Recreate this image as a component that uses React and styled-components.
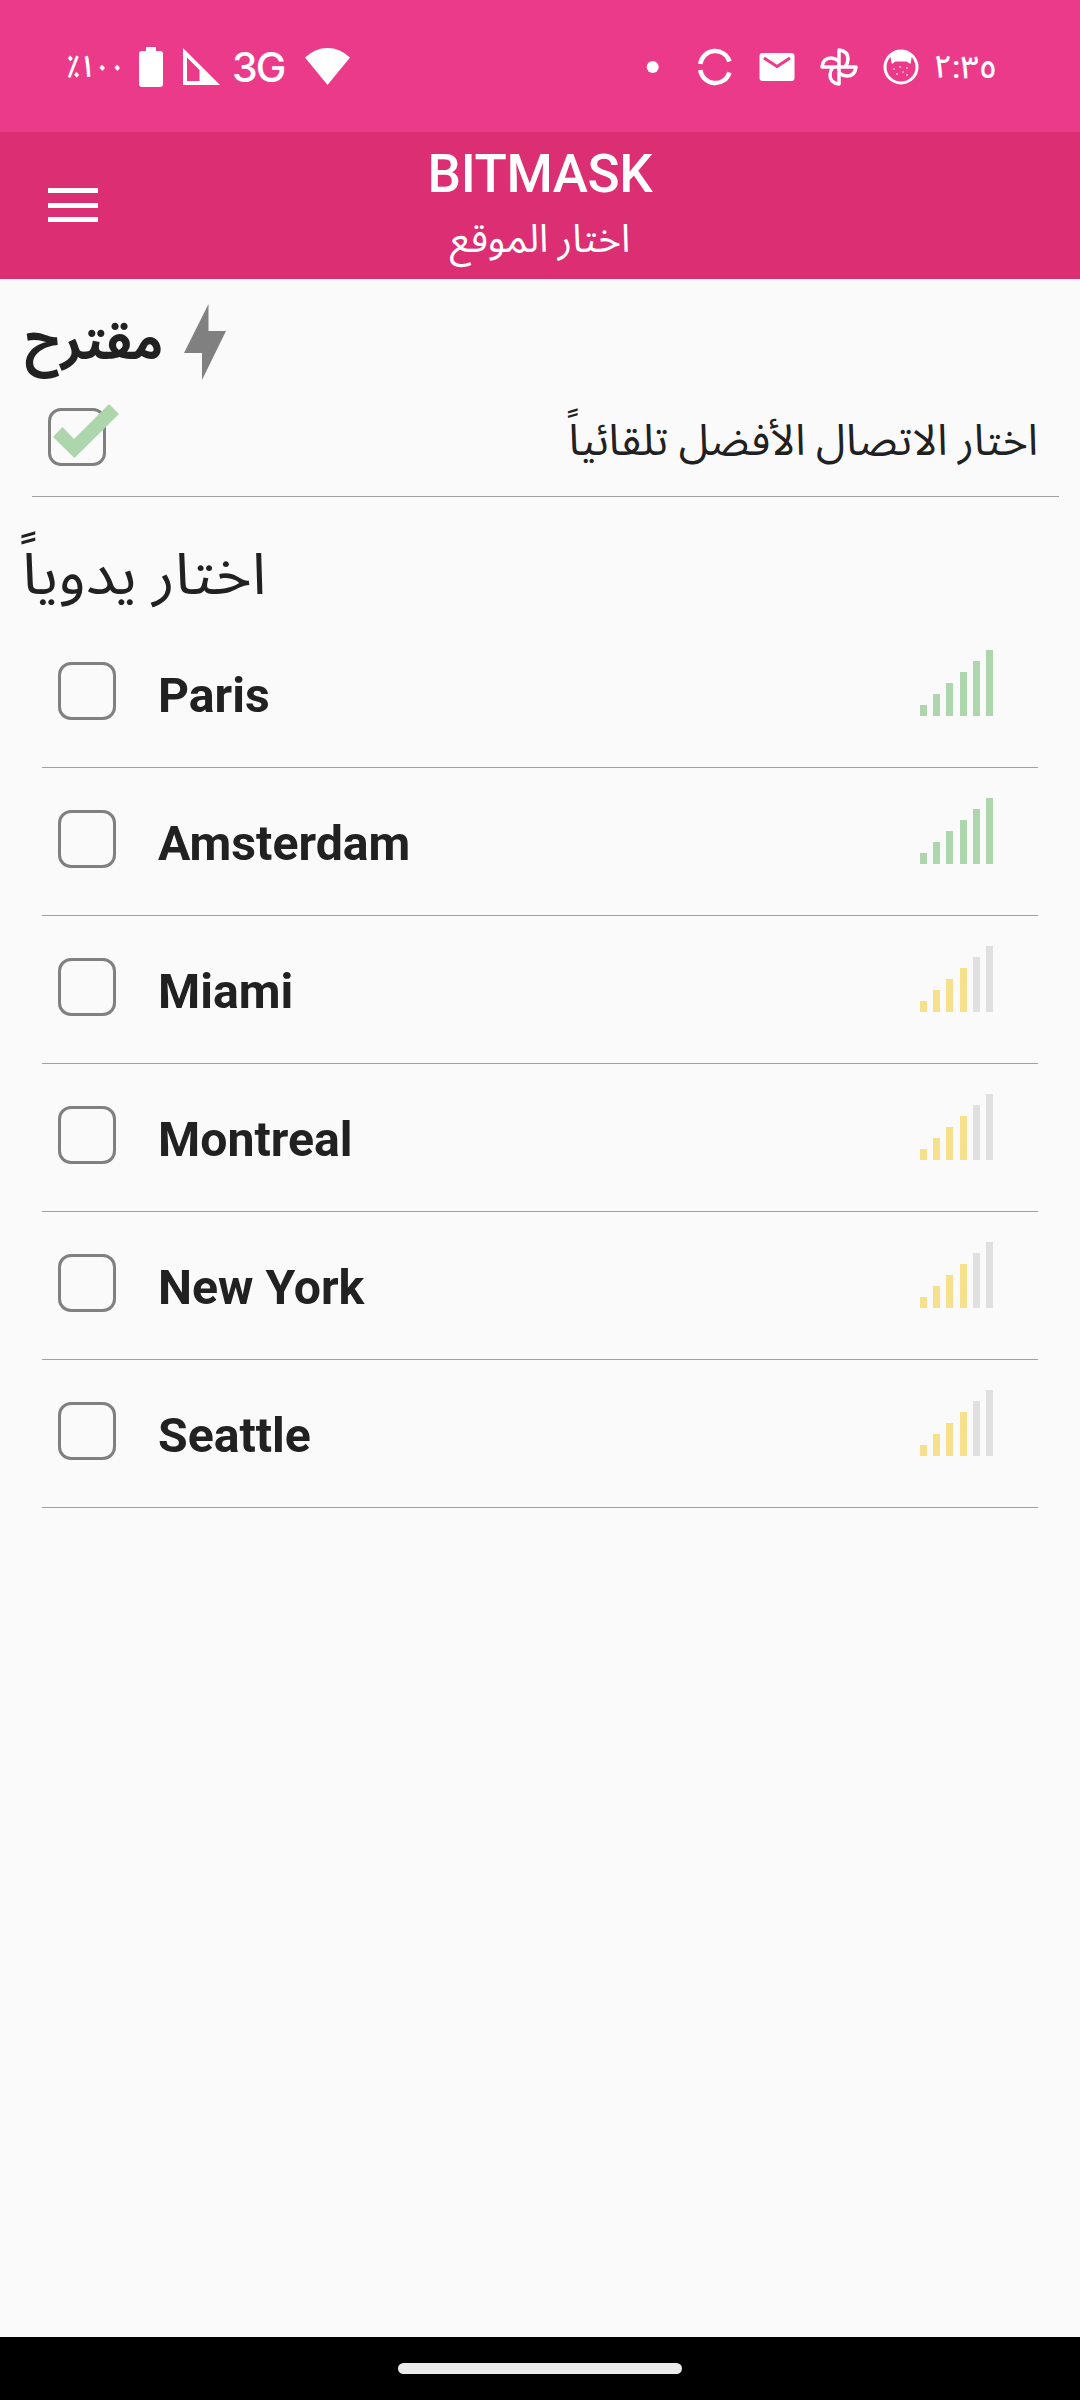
import styled, { createGlobalStyle } from "styled-components";

const GlobalStyle = createGlobalStyle`
  * {
    box-sizing: border-box;
  }

  body {
    margin: 0;
    background: #fafafa;
    color: #212121;
    font-family: Roboto, "Noto Sans Arabic", "Noto Naskh Arabic", "DejaVu Sans", sans-serif;
  }
`;

const Screen = styled.div`
  width: 1080px;
  height: 2400px;
  display: flex;
  flex-direction: column;
  background: #fafafa;
`;

const StatusBar = styled.div`
  height: 132px;
  padding: 2px 83px 0 70px;
  display: flex;
  justify-content: space-between;
  align-items: center;
  background: #ec3a8b;
  color: white;
`;

const StatusGroup = styled.div`
  display: flex;
  align-items: center;

  svg {
    display: block;
    flex: none;
  }
`;

const Arabic = styled.span`
  display: block;
  direction: rtl;
  white-space: nowrap;
  font-size: ${(props) => props.$size}px;
  font-weight: ${(props) => props.$weight || 400};
  line-height: ${(props) => props.$line}px;
`;

const StatusText = styled(Arabic)`
  width: ${(props) => props.$width}px;
`;

const BatteryLevel = styled(Arabic)`
  width: 69px;
  padding-right: 4px;
  transform: scaleX(0.84);
  transform-origin: left center;
`;

const Network = styled.span`
  width: 50px;
  margin: 0 23px 0 12px;
  font-family: Inter, sans-serif;
  font-size: 41px;
  font-weight: 500;
  line-height: 46px;
  letter-spacing: -2px;
`;

const BatteryIcon = styled.svg`
  margin-right: 20px;
`;

const AppBar = styled.header`
  height: 147px;
  padding: 0 48px;
  display: grid;
  grid-template-columns: 50px 1fr 50px;
  background: #dc2e73;
  color: white;
`;

const MenuButton = styled.button`
  width: 50px;
  height: 34px;
  margin-top: 56px;
  padding: 0;
  border: 0;
  background: none;
  display: flex;
  flex-direction: column;
  justify-content: space-between;
`;

const MenuLine = styled.span`
  width: 50px;
  height: 5px;
  background: white;
`;

const Heading = styled.div`
  display: flex;
  flex-direction: column;
  align-items: center;
`;

const Title = styled.h1`
  margin: 0;
  padding-top: 9px;
  font-size: 53px;
  font-weight: 500;
  line-height: 66px;
  letter-spacing: -0.4px;
`;

const Content = styled.main`
  flex: 1;
`;

const Recommended = styled.h2`
  height: 113px;
  margin: 0;
  padding: 25px 0 0 25px;
  display: flex;
  align-items: flex-start;
  gap: 21px;
`;

const AutoRow = styled.div`
  height: 105px;
  margin: 0 21px 0 32px;
  padding: 12px 21px 0 16px;
  display: flex;
  justify-content: space-between;
  align-items: flex-start;
  border-bottom: 1px solid #a0a0a0;
`;

const AutoLabel = styled(Arabic)`
  margin-top: 4px;
`;

const ManualTitle = styled.h2`
  height: 123px;
  margin: 0;
  padding: 40px 0 0 22px;
  display: flex;
`;

const ManualLabel = styled(Arabic)`
  transform: scaleX(1.07);
  transform-origin: left center;
`;

const LocationRow = styled.div`
  height: 148px;
  margin: 0 42px;
  padding: 0 45px 0 16px;
  display: flex;
  align-items: flex-start;
  border-bottom: 1px solid #a0a0a0;
`;

const CheckFrame = styled.div`
  position: relative;
  flex: none;
  width: 58px;
  height: 58px;
  margin-top: ${(props) => props.$top || 0}px;
  border: 3px solid #808080;
  border-radius: 13px;

  svg {
    position: absolute;
    left: 2px;
    top: -7px;
  }
`;

const LocationName = styled.span`
  flex: 1;
  margin: 48px 0 0 42px;
  font-size: 48.2px;
  font-weight: 700;
  line-height: 56px;
`;

const Bars = styled.div`
  display: flex;
  align-items: flex-end;
  justify-content: space-between;
  width: 73px;
  height: 66px;
  margin-top: 30px;
`;

const Bar = styled.span`
  width: 7px;
  height: ${(props) => props.$step * 11}px;
  background: ${(props) => props.$color};
`;

const NavigationBar = styled.div`
  height: 63px;
  display: flex;
  justify-content: center;
  align-items: center;
  background: black;
`;

const HomePill = styled.div`
  width: 284px;
  height: 11px;
  border-radius: 6px;
  background: #ebebeb;
`;

const locations = [
  { name: "Paris", level: 6 },
  { name: "Amsterdam", level: 6 },
  { name: "Miami", level: 4 },
  { name: "Montreal", level: 4 },
  { name: "New York", level: 4 },
  { name: "Seattle", level: 4 },
];

function Signal({ level }) {
  const active = level > 4 ? "#aed6ac" : "#f7e08c";
  return (
    <Bars>
      {[1, 2, 3, 4, 5, 6].map((step) => (
        <Bar key={step} $step={step} $color={step <= level ? active : "#e0e0e0"} />
      ))}
    </Bars>
  );
}

function NotificationIcons() {
  return (
    <svg width="297" height="54" viewBox="0 0 297 54" fill="white">
      <circle cx="12.700" cy="27" r="6" />
      <path
        d="M60.300 24A15 15 0 0 1 89.500 21.500M60.300 30A15 15 0 0 0 89.500 32.500"
        fill="none"
        stroke="white"
        strokeWidth="4.500"
      />
      <rect x="119.500" y="13" width="35" height="28" rx="3" />
      <path d="M124 18l13 8.500L150 18" fill="none" stroke="#ec3a8b" strokeWidth="3" />
      <g transform="translate(199 27)" fill="none" stroke="white" strokeWidth="3.500" strokeLinejoin="round">
        {[0, 90, 180, 270].map((angle) => (
          <path key={angle} d="M0 0V-17Q9 -16 9 -8Q9 -4 6 0" transform={`rotate(${angle})`} />
        ))}
      </g>
      <circle cx="261" cy="27" r="16" fill="none" stroke="white" strokeWidth="3" />
      <path d="M250 15q11-8 22 0l-1.500 9-4-2.500h-11L252 24z" />
      <g opacity="0.6">
        <circle cx="254" cy="29" r="1" />
        <circle cx="260" cy="27" r="1" />
        <circle cx="267" cy="28" r="1" />
        <circle cx="257" cy="34" r="1" />
        <circle cx="263" cy="32" r="1" />
        <circle cx="267" cy="35" r="1" />
      </g>
    </svg>
  );
}

export default function App() {
  return (
    <Screen>
      <GlobalStyle />
      <StatusBar>
        <StatusGroup>
          <BatteryLevel $size={31} $weight={600} $line={46}>
            ١٠٠٪
          </BatteryLevel>
          <BatteryIcon width="24" height="40" viewBox="0 0 24 40" fill="white">
            <path d="M7 0h10v4h4q3 0 3 3v30q0 3-3 3H3q-3 0-3-3V7q0-3 3-3h4z" />
          </BatteryIcon>
          <svg width="37" height="40" viewBox="0 0 37 40" fill="white">
            <path fillRule="evenodd" d="M0 1v37h37zM4 10.500V34h12.500V23z" />
          </svg>
          <Network>3G</Network>
          <svg width="45" height="40" viewBox="0 0 45 40" fill="white">
            <path d="M0 10.500Q10 1 22.500 1T45 10.500L22.500 38z" />
          </svg>
        </StatusGroup>
        <StatusGroup>
          <NotificationIcons />
          <StatusText $size={32} $weight={500} $line={48} $width={60}>
            ٢:٣٥
          </StatusText>
        </StatusGroup>
      </StatusBar>
      <AppBar>
        <MenuButton aria-label="menu">
          <MenuLine />
          <MenuLine />
          <MenuLine />
        </MenuButton>
        <Heading>
          <Title>BITMASK</Title>
          <Arabic $size={39} $line={64}>
            اختار الموقع
          </Arabic>
        </Heading>
      </AppBar>
      <Content>
        <Recommended>
          <Arabic $size={52} $weight={700} $line={76}>
            مقترح
          </Arabic>
          <svg width="42" height="76" viewBox="0 0 42 76" fill="#808080">
            <path d="M24.500 0v27H42L18 76V49H0z" />
          </svg>
        </Recommended>
        <AutoRow>
          <CheckFrame $top={4}>
            <svg width="66" height="54" viewBox="0 0 66 54" fill="#aed6ac">
              <path d="M0 33l9.500-10L21 35 56 0l10 10-44.500 44z" />
            </svg>
          </CheckFrame>
          <AutoLabel $size={43} $line={64}>
            اختار الاتصال الأفضل تلقائياً
          </AutoLabel>
        </AutoRow>
        <ManualTitle>
          <ManualLabel $size={57.5} $line={76}>
            اختار يدوياً
          </ManualLabel>
        </ManualTitle>
        {locations.map((item) => (
          <LocationRow key={item.name}>
            <CheckFrame $top={42} />
            <LocationName>{item.name}</LocationName>
            <Signal level={item.level} />
          </LocationRow>
        ))}
      </Content>
      <NavigationBar>
        <HomePill />
      </NavigationBar>
    </Screen>
  );
}
